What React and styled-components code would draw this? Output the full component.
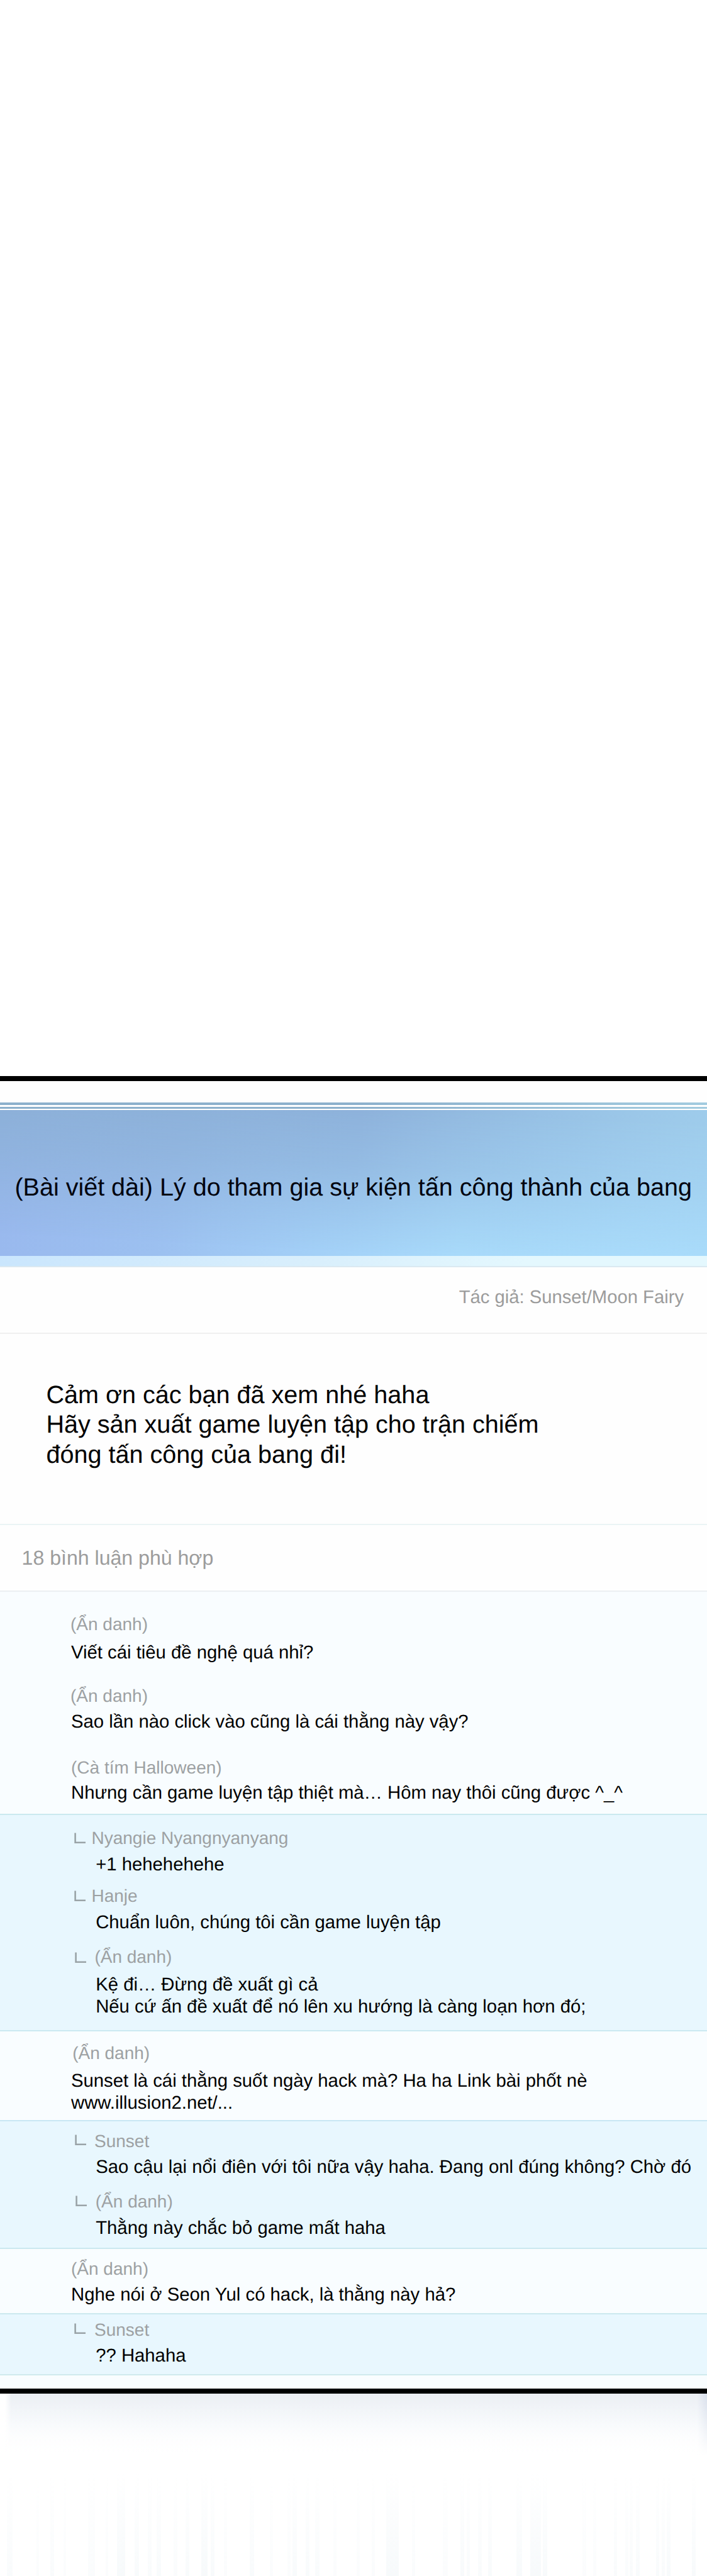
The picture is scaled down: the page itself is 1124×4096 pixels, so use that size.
import React from 'react';
import styled, { createGlobalStyle } from 'styled-components';

const sections = [
  {
    height: 355,
    line: '#ecf0f3',
    comments: [
      { name: '(Ẩn danh)', x: 112, top: 36, gap: 11, lines: ['Viết cái tiêu đề nghệ quá nhỉ?'] },
      {
        name: '(Ẩn danh)',
        x: 112,
        top: 35.6,
        gap: 7,
        lines: ['Sao lần nào click vào cũng là cái thằng này vậy?'],
      },
      {
        name: '(Cà tím Halloween)',
        x: 113,
        top: 39.6,
        gap: 6,
        lines: ['Nhưng cần game luyện tập thiệt mà… Hôm nay thôi cũng được ^_^'],
      },
    ],
  },
  {
    height: 344,
    reply: true,
    line: '#cbe9ef',
    comments: [
      { name: 'Nyangie Nyangnyanyang', x: 118.4, nameX: 145.5, lift: 1, top: 21, gap: 8, lines: ['+1 hehehehehe'] },
      {
        name: 'Hanje',
        x: 117.6,
        nameX: 145.5,
        lift: 1,
        top: 16.6,
        gap: 8,
        lines: ['Chuẩn luôn, chúng tôi cần game luyện tập'],
      },
      {
        name: '(Ẩn danh)',
        x: 119.2,
        nameX: 150.4,
        lift: 0,
        top: 21.6,
        gap: 10,
        lines: ['Kệ đi… Đừng đề xuất gì cả', 'Nếu cứ ấn đề xuất để nó lên xu hướng là càng loạn hơn đó;'],
      },
    ],
  },
  {
    height: 143,
    line: '#cbe9f1',
    comments: [
      {
        name: '(Ẩn danh)',
        x: 115.2,
        top: 19,
        gap: 10,
        lines: ['Sunset là cái thằng suốt ngày hack mà? Ha ha Link bài phốt nè', 'www.illusion2.net/...'],
      },
    ],
  },
  {
    height: 203,
    reply: true,
    line: '#c8e7f4',
    comments: [
      {
        name: 'Sunset',
        x: 119,
        nameX: 150,
        lift: 3,
        top: 16,
        gap: 7,
        lines: ['Sao cậu lại nổi điên với tôi nữa vậy haha. Đang onl đúng không? Chờ đó'],
      },
      {
        name: '(Ẩn danh)',
        x: 120.3,
        nameX: 151.8,
        lift: 2,
        top: 21.6,
        gap: 8,
        lines: ['Thằng này chắc bỏ game mất haha'],
      },
    ],
  },
  {
    height: 104,
    line: '#cbe8ef',
    comments: [
      {
        name: '(Ẩn danh)',
        x: 113,
        top: 16,
        gap: 7,
        lines: ['Nghe nói ở Seon Yul có hack, là thằng này hả?'],
      },
    ],
  },
  {
    height: 97,
    reply: true,
    line: '#cbe9ef',
    comments: [{ name: 'Sunset', x: 118.4, nameX: 150, lift: 3, top: 9, gap: 7, lines: ['?? Hahaha'] }],
  },
  { height: 23, line: '#d0eaed', comments: [] },
];

// [x, width, opacity] of every faint streak at the foot of the page
const streaks = [
  [11, 9, 0.7], [58, 4, 0.5], [80, 6, 0.7], [101, 4, 0.5], [140, 11, 0.6], [168, 4, 0.5], [186, 13, 1],
  [214, 7, 0.8], [235, 6, 0.7], [249, 7, 0.8], [276, 6, 0.6], [295, 6, 0.8], [320, 10, 1], [335, 6, 0.9],
  [356, 5, 0.5], [397, 7, 0.8], [429, 5, 0.5], [457, 5, 0.5], [465, 7, 0.8], [486, 6, 0.8], [501, 7, 0.7],
  [530, 5, 0.5], [567, 5, 0.5], [591, 5, 0.6], [614, 20, 1], [655, 5, 0.6], [704, 8, 0.5], [732, 6, 0.9],
  [742, 5, 0.7], [760, 6, 0.7], [776, 6, 0.8], [821, 9, 0.9], [843, 17, 1], [863, 7, 0.9], [926, 6, 0.5],
  [943, 5, 0.5], [976, 5, 0.7], [994, 5, 0.6], [1001, 5, 0.7], [1011, 6, 0.8], [1043, 5, 0.8], [1052, 5, 0.7],
  [1060, 6, 0.9], [1100, 6, 0.9],
];

function ReplyMark({ lift }) {
  return (
    <MarkIcon $lift={lift} viewBox="0 0 18 17" aria-hidden="true">
      <path d="M1.6 0.5V15.8H18" fill="none" stroke="#9aa3a7" strokeWidth="2.6" />
    </MarkIcon>
  );
}

function Comment({ data, reply }) {
  return (
    <CommentItem $top={data.top}>
      <CommentHead $x={data.x}>
        {reply && (
          <MarkCell $width={data.nameX - data.x}>
            <ReplyMark lift={data.lift} />
          </MarkCell>
        )}
        {data.name}
      </CommentHead>
      <CommentText $gap={data.gap} $reply={reply}>
        {data.lines.map((line) => (
          <Line key={line}>{line}</Line>
        ))}
      </CommentText>
    </CommentItem>
  );
}

export default function App() {
  return (
    <Page>
      <GlobalStyle />
      <Post>
        <TitleRules />
        <TitleBar>
          <Title>(Bài viết dài) Lý do tham gia sự kiện tấn công thành của bang</Title>
        </TitleBar>
        <TitleFooter />
        <Author>Tác giả: Sunset/Moon Fairy</Author>
        <Body>
          <Line>Cảm ơn các bạn đã xem nhé haha</Line>
          <Line>Hãy sản xuất game luyện tập cho trận chiếm</Line>
          <Line>đóng tấn công của bang đi!</Line>
        </Body>
        <CommentCount>18 bình luận phù hợp</CommentCount>
        {sections.map((section, i) => (
          <Section key={i} $height={section.height} $reply={section.reply} $line={section.line}>
            {section.comments.map((comment, j) => (
              <Comment key={j} data={comment} reply={section.reply} />
            ))}
          </Section>
        ))}
      </Post>
      <Shadow />
      <Streaks viewBox="0 0 1124 192" aria-hidden="true">
        <defs>
          <linearGradient id="streak" x1="0" y1="0" x2="0" y2="1">
            <stop offset="0.15" stopColor="#f4f8fa" stopOpacity="0" />
            <stop offset="1" stopColor="#f4f8fa" stopOpacity="0.75" />
          </linearGradient>
        </defs>
        {streaks.map(([x, width, opacity]) => (
          <rect key={x} x={x} y="0" width={width} height="192" opacity={opacity} fill="url(#streak)" />
        ))}
      </Streaks>
    </Page>
  );
}

const GlobalStyle = createGlobalStyle`
  * {
    box-sizing: border-box;
  }
  body {
    margin: 0;
    background: #fff;
    font-family: 'Liberation Sans', Arial, sans-serif;
    text-rendering: geometricPrecision;
  }
`;

const Page = styled.div`
  display: flex;
  flex-direction: column;
  width: 1124px;
  height: 4096px;
  padding-top: 1711px;
  overflow: hidden;
`;

const Post = styled.article`
  display: flex;
  flex-direction: column;
  border-top: 8px solid #000;
  border-bottom: 8px solid #000;
  background: #fefefe;
`;

const TitleRules = styled.div`
  height: 10px;
  margin: 34px 0 2px;
  background:
    linear-gradient(#fff, #fff) 0 4px / 100% 3px no-repeat,
    linear-gradient(90deg, #8cb0cc 50%, #a2cbdf);
`;

const TitleBar = styled.header`
  position: relative;
  display: flex;
  align-items: center;
  height: 232px;
  padding: 14px 0 0 23.4px;
  background: linear-gradient(90deg, #99b9ee 0%, #9cc0f0 22%, #a3d0f7 45%, #a9dbfb 65%, #abdefd 100%);

  &::before {
    content: '';
    position: absolute;
    inset: 0;
    background: linear-gradient(97deg, #8bafd6 0%, #8db1da 50%, #97c1e5 75%, #9fcdec 100%);
    mask-image: linear-gradient(183deg, #000 8%, rgba(0, 0, 0, 0.7) 40%, transparent 88%);
  }
`;

const Title = styled.h1`
  position: relative;
  margin: 0;
  font-size: 39.53px;
  font-weight: 400;
  line-height: 48px;
  white-space: nowrap;
  color: #02040f;
`;

const TitleFooter = styled.div`
  height: 18px;
  border-bottom: 2px solid #dbe9f1;
  background: linear-gradient(90deg, #cae6fd, #d9effc 45%, #e4f8fe 75%);
`;

const Author = styled.div`
  height: 106px;
  padding: 30px 37px 0 0;
  border-bottom: 2px solid #f0f0f0;
  font-size: 29.22px;
  line-height: 36px;
  text-align: right;
  color: #9c9c9c;
`;

const Body = styled.div`
  height: 304px;
  padding: 74px 0 0 73.4px;
  border-bottom: 2px solid #eaf4f5;
  font-size: 39.6px;
  line-height: 47.4px;
  color: #000;
`;

const CommentCount = styled.div`
  height: 104px;
  padding: 32px 0 0 34.6px;
  font-size: 32.1px;
  line-height: 40px;
  color: #9c9c9c;
`;

const Section = styled.section`
  height: ${({ $height }) => $height}px;
  border-top: 2px solid ${({ $line }) => $line};
  background: ${({ $reply }) => ($reply ? '#e8f7fe' : '#f9fdff')};
`;

const CommentItem = styled.div`
  display: flex;
  flex-direction: column;
  padding-top: ${({ $top }) => $top}px;
`;

const CommentHead = styled.div`
  display: flex;
  height: 32px;
  padding-left: ${({ $x }) => $x}px;
  font-size: 28px;
  line-height: 32px;
  white-space: nowrap;
  color: #9da1a3;
`;

const MarkCell = styled.span`
  display: flex;
  align-items: flex-end;
  flex: none;
  width: ${({ $width }) => $width}px;
`;

const MarkIcon = styled.svg`
  width: 18px;
  height: 17px;
  margin-bottom: ${({ $lift }) => 7 + $lift}px;
`;

const CommentText = styled.div`
  margin-top: ${({ $gap }) => $gap}px;
  padding-left: ${({ $reply }) => ($reply ? 152.2 : 113)}px;
  font-size: 29.29px;
  line-height: 35.4px;
  color: #000;
`;

const Line = styled.div`
  white-space: nowrap;
`;

const Shadow = styled.div`
  height: 98px;
  background:
    linear-gradient(90deg, #fff 8px, rgba(255, 255, 255, 0) 18px),
    linear-gradient(180deg, rgba(255, 255, 255, 0), #fff),
    linear-gradient(270deg, #d9e0ec, rgba(226, 231, 241, 0) 16px),
    linear-gradient(180deg, #ebeef3 0%, #edf1f6 25%, #f1f6fa 50%, #f8fafc 75%, #fff 100%);
`;

const Streaks = styled.svg`
  width: 1124px;
  height: 192px;
`;
